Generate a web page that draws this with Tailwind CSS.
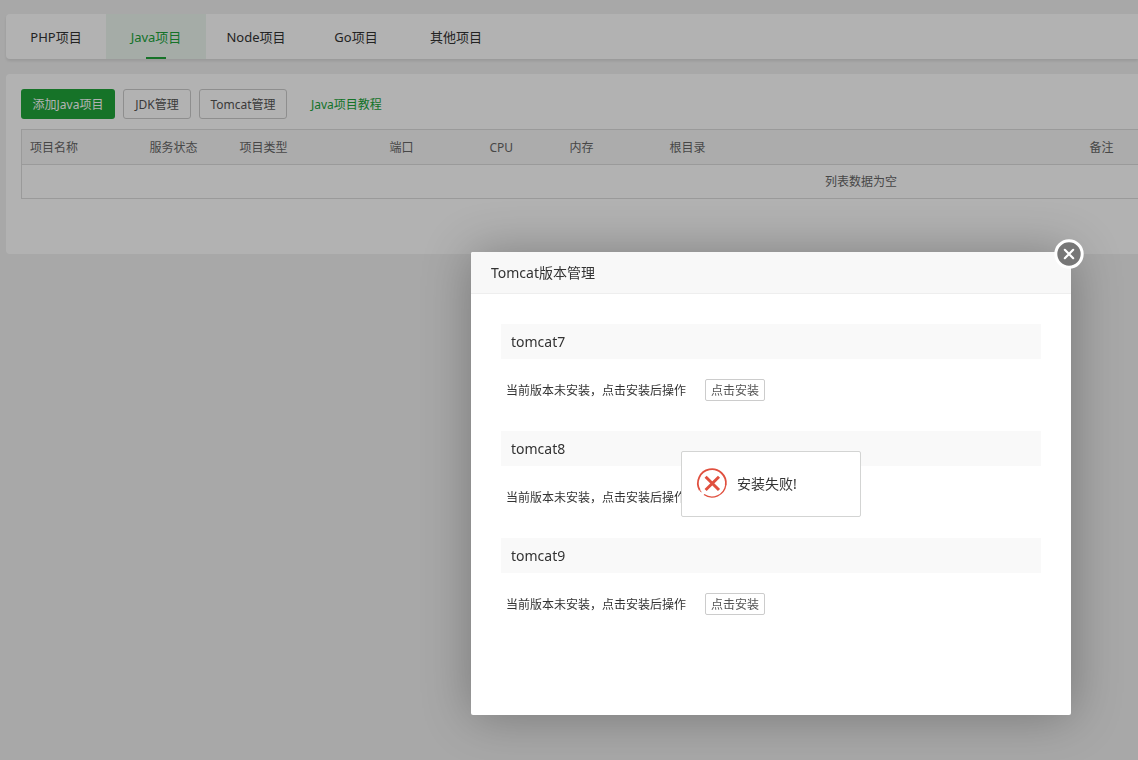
<!DOCTYPE html>
<html lang="zh-CN">
<head>
<meta charset="utf-8">
<meta name="viewport" content="width=device-width, initial-scale=1">
<title>Java项目</title>
<script src="https://cdn.jsdelivr.net/npm/@tailwindcss/browser@4"></script>
</head>
<body class="min-h-screen overflow-hidden bg-[#f1f1f1] font-['Noto_Sans','Noto_Sans_CJK_SC',sans-serif] text-xs leading-[17px] text-[#333]">
  <main class="flex flex-col gap-[15px] pt-[14px] pl-[6px]">
    <nav class="flex h-[45px] rounded-l bg-white text-[13px] leading-[18px] shadow-[0_2px_3px_rgba(0,0,0,0.09)]">
      <a href="#" class="flex w-[100px] items-center justify-center">PHP项目</a>
      <a href="#" aria-current="page" class="relative flex w-[100px] items-center justify-center bg-[#edf6f0] text-[#20a53a]">Java项目<span class="absolute bottom-0 left-1/2 h-[2px] w-5 -translate-x-1/2 bg-[#20a53a]"></span></a>
      <a href="#" class="flex w-[100px] items-center justify-center">Node项目</a>
      <a href="#" class="flex w-[100px] items-center justify-center">Go项目</a>
      <a href="#" class="flex w-[100px] items-center justify-center">其他项目</a>
    </nav>

    <section class="overflow-hidden rounded-l bg-white pt-[15px] pb-[55px] pl-[15px]">
      <div class="flex items-center gap-2">
        <button type="button" class="h-[30px] w-[94px] rounded-[3px] bg-[#20a53a] text-white">添加Java项目</button>
        <button type="button" class="h-[30px] w-[68px] rounded-[3px] border border-[#ccc] text-[#555]">JDK管理</button>
        <button type="button" class="h-[30px] w-[88px] rounded-[3px] border border-[#ccc] text-[#555]">Tomcat管理</button>
        <a href="#" class="ml-4 text-[#20a53a]">Java项目教程</a>
      </div>
      <table class="mt-[10px] w-[1680px] table-fixed border-collapse border border-[#ddd] text-left text-[#666]">
        <thead class="bg-[#f6f6f6]">
          <tr class="h-[35px] border-b border-[#ddd]">
            <th class="w-[120px] px-2 font-normal">项目名称</th>
            <th class="w-[90px] px-2 font-normal">服务状态</th>
            <th class="w-[150px] px-2 font-normal">项目类型</th>
            <th class="w-[100px] px-2 font-normal">端口</th>
            <th class="w-[80px] px-2 font-normal">CPU</th>
            <th class="w-[100px] px-2 font-normal">内存</th>
            <th class="w-[420px] px-2 font-normal">根目录</th>
            <th class="px-2 font-normal">备注</th>
          </tr>
        </thead>
        <tbody>
          <tr class="h-[34px]"><td colspan="8" class="text-center">列表数据为空</td></tr>
        </tbody>
      </table>
    </section>
  </main>

  <div class="fixed inset-0 bg-black/30"></div>

  <div role="dialog" aria-labelledby="dialog-title" class="absolute top-[252px] left-[471px] w-[600px] rounded-[2px] bg-white shadow-[1px_1px_50px_rgba(0,0,0,0.3)]">
    <h2 id="dialog-title" class="flex h-[42px] items-center rounded-t-[2px] border-b border-[#eee] bg-[#f8f8f8] px-5 text-sm">Tomcat版本管理</h2>
    <button type="button" aria-label="关闭" class="absolute -top-[13px] -right-[13px] size-[30px]">
      <svg viewBox="0 0 30 30" class="size-full" fill="none">
        <circle cx="15" cy="15" r="13.2" fill="#777" stroke="#fff" stroke-width="3"/>
        <path d="M10.8 10.8l8.4 8.4M19.2 10.8l-8.4 8.4" stroke="#fff" stroke-width="2.2" stroke-linecap="round"/>
      </svg>
    </button>
    <div class="flex flex-col gap-[30px] px-[30px] pt-[30px] pb-[100px]">
      <section>
        <h3 class="flex h-[35px] items-center bg-[#f9f9f9] px-[10px] text-sm">tomcat7</h3>
        <div class="mt-5 flex h-[22px] items-center pl-[5px]">
          <span>当前版本未安装，点击安装后操作</span>
          <button type="button" class="ml-[19px] h-[22px] w-[60px] rounded-[2px] border border-[#ccc] text-[#555]">点击安装</button>
        </div>
      </section>
      <section>
        <h3 class="flex h-[35px] items-center bg-[#f9f9f9] px-[10px] text-sm">tomcat8</h3>
        <div class="mt-5 flex h-[22px] items-center pl-[5px]">
          <span>当前版本未安装，点击安装后操作</span>
        </div>
      </section>
      <section>
        <h3 class="flex h-[35px] items-center bg-[#f9f9f9] px-[10px] text-sm">tomcat9</h3>
        <div class="mt-5 flex h-[22px] items-center pl-[5px]">
          <span>当前版本未安装，点击安装后操作</span>
          <button type="button" class="ml-[19px] h-[22px] w-[60px] rounded-[2px] border border-[#ccc] text-[#555]">点击安装</button>
        </div>
      </section>
    </div>
  </div>

  <div role="alert" class="absolute top-[451px] left-[681px] flex h-[66px] w-[180px] items-center gap-[10px] rounded-[2px] border border-[#d3d4d3] bg-white px-[15px] text-sm">
    <svg viewBox="0 1 30 30" class="size-[30px] overflow-visible" fill="none" stroke="#e0503f">
      <path d="M2.7 22A14 14 0 1 1 28.8 17" stroke-width="1.8"/>
      <path d="M28.8 17A14 14 0 0 1 7 26.5" stroke-width="1.4"/>
      <path d="M2.7 22l1.6 2.2" stroke-width="1"/>
      <path d="M8.6 8.8L22 22M22 8.8L8.6 22" stroke-width="3"/>
    </svg>
    <span>安装失败!</span>
  </div>
</body>
</html>
